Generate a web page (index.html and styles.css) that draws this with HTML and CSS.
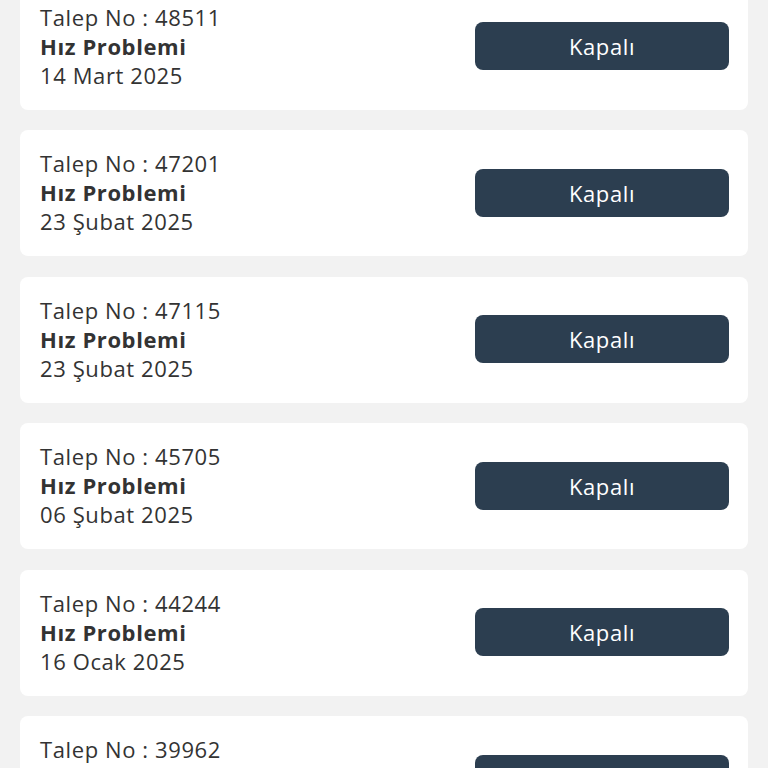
FILE: index.html
```html
<!DOCTYPE html>
<html>
<head>
    <title>Taleplerim</title>
    <link rel="stylesheet" href="styles.css">
</head>
<body>
    <div class="ticket-list">
        <div class="ticket">
            <div class="ticket-info">
                <div>Talep No : 48511</div>
                <div class="ticket-title">Hız Problemi</div>
                <div>14 Mart 2025</div>
            </div>
            <button class="status">Kapalı</button>
        </div>
        <div class="ticket">
            <div class="ticket-info">
                <div>Talep No : 47201</div>
                <div class="ticket-title">Hız Problemi</div>
                <div>23 Şubat 2025</div>
            </div>
            <button class="status">Kapalı</button>
        </div>
        <div class="ticket">
            <div class="ticket-info">
                <div>Talep No : 47115</div>
                <div class="ticket-title">Hız Problemi</div>
                <div>23 Şubat 2025</div>
            </div>
            <button class="status">Kapalı</button>
        </div>
        <div class="ticket">
            <div class="ticket-info">
                <div>Talep No : 45705</div>
                <div class="ticket-title">Hız Problemi</div>
                <div>06 Şubat 2025</div>
            </div>
            <button class="status">Kapalı</button>
        </div>
        <div class="ticket">
            <div class="ticket-info">
                <div>Talep No : 44244</div>
                <div class="ticket-title">Hız Problemi</div>
                <div>16 Ocak 2025</div>
            </div>
            <button class="status">Kapalı</button>
        </div>
        <div class="ticket">
            <div class="ticket-info">
                <div>Talep No : 39962</div>
                <div class="ticket-title">Hız Problemi</div>
                <div>08 Ocak 2025</div>
            </div>
            <button class="status">Kapalı</button>
        </div>
    </div>
</body>
</html>
```

FILE: styles.css
```css
body {
    margin: 0;
    background-color: #f2f2f2;
    font-family: "Open Sans", "Noto Sans", sans-serif;
    color: #333;
    overflow: hidden;
}
.ticket-list {
    margin: -16.5px 20px 0 20px;
}
.ticket {
    display: flex;
    align-items: center;
    justify-content: space-between;
    background-color: white;
    border-radius: 8px;
    padding: 19px 19px 20px 20px;
    margin-bottom: 20.5px;
}
.ticket-info {
    font-size: 22px;
    line-height: 29px;
    letter-spacing: 0.6px;
}
.ticket-title {
    font-weight: bold;
}
.status {
    width: 254px;
    height: 48px;
    border: none;
    border-radius: 8px;
    background-color: #2c3e50;
    color: white;
    font-family: "Open Sans", "Noto Sans", sans-serif;
    font-size: 22px;
    letter-spacing: 0.6px;
}
```
